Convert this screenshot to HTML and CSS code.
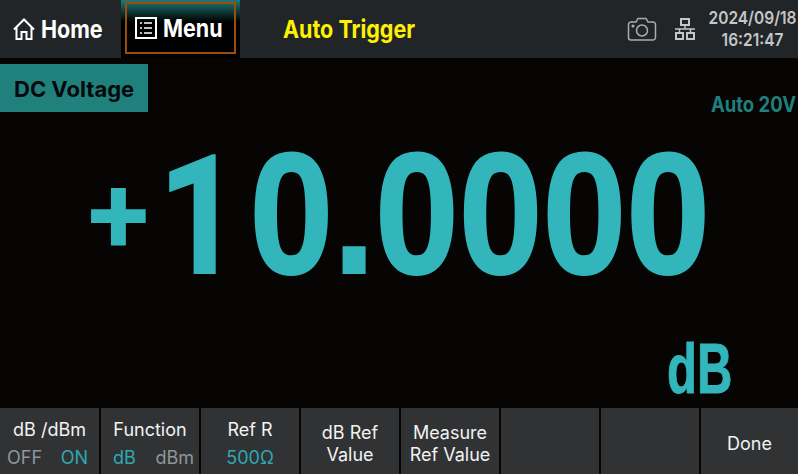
FILE: index.html
```html
<!DOCTYPE html>
<html lang="en">
<head>
  <meta charset="UTF-8" />
  <title>DC Voltage</title>
  <link rel="stylesheet" href="styles.css">
</head>
<body>
  <div class="screen">
    <header class="topbar">
      <div class="nav-home">
        <svg class="icon" width="22" height="22" viewBox="0 0 22 22" fill="none" stroke="#fff" stroke-width="2">
          <path d="M1 11.500 11 1.500l10 10M3.500 9.500V21h5v-7h5v7h5V9.500" />
        </svg>
        <span class="tall">Home</span>
      </div>
      <div class="nav-menu">
        <div class="nav-menu-box">
          <svg class="icon" width="22" height="22" viewBox="0 0 22 22" fill="none" stroke="#fff" stroke-width="2">
            <rect x="1" y="1" width="20" height="20" />
            <path d="M5 6h2M9 6h8M5 11h2M9 11h8M5 16h2M9 16h8" stroke-width="1.500" />
          </svg>
          <span class="tall">Menu</span>
        </div>
      </div>
      <div class="trigger"><span class="tall">Auto Trigger</span></div>
      <div class="status">
        <svg class="camera" width="30" height="26" viewBox="0 0 30 26" fill="none" stroke="#a9adaf" stroke-width="1.500">
          <path d="M4 6h5l2-3.500h8L21 6h5a2.500 2.500 0 0 1 2.500 2.500v13A2.500 2.500 0 0 1 26 24H4a2.500 2.500 0 0 1-2.500-2.500v-13A2.500 2.500 0 0 1 4 6Z" />
          <circle cx="15" cy="14.500" r="5.500" />
          <circle cx="6" cy="10" r="0.800" fill="#a9adaf" />
        </svg>
        <svg class="network" width="20" height="22" viewBox="0 0 20 22" fill="none" stroke="#c4c6c7" stroke-width="2">
          <rect x="6" y="1" width="8" height="6" />
          <rect x="1" y="15" width="7" height="6" />
          <rect x="12" y="15" width="7" height="6" />
          <path d="M10 7v4M0 11h20M4.500 11v4M15.500 11v4" stroke-width="1.500" />
        </svg>
        <div class="clock">
          <div class="tall">2024/09/18</div>
          <div class="tall">16:21:47</div>
        </div>
      </div>
    </header>

    <main class="display">
      <div class="display-head">
        <div class="mode">DC Voltage</div>
        <div class="range tall">Auto 20V</div>
      </div>
      <div class="reading">
        <span class="sign">+</span>
        <span class="digits"><span class="one">1</span>0.0000</span>
      </div>
      <div class="unit"><span>dB</span></div>
    </main>

    <footer class="softkeys">
      <div class="key">
        <div>dB /dBm</div>
        <div class="opts opts-onoff"><span class="off">OFF</span><span class="on">ON</span></div>
      </div>
      <div class="key">
        <div>Function</div>
        <div class="opts opts-func"><span class="on">dB</span><span class="off">dBm</span></div>
      </div>
      <div class="key">
        <div>Ref R</div>
        <div class="opts opts-single"><span class="on">500Ω</span></div>
      </div>
      <div class="key key-center"><div>dB Ref</div><div>Value</div></div>
      <div class="key key-center"><div>Measure</div><div>Ref Value</div></div>
      <div class="key"></div>
      <div class="key"></div>
      <div class="key key-center"><div>Done</div></div>
    </footer>
  </div>
</body>
</html>
```

FILE: styles.css
```css
* {
  box-sizing: border-box;
}

body {
  margin: 0;
  background: #070404;
  font-family: 'Inter', sans-serif;
}

.screen {
  width: 798px;
  height: 474px;
  display: flex;
  flex-direction: column;
  overflow: hidden;
}

/* the device font is drawn a bit taller than Inter */
.tall {
  display: inline-block;
  transform: scaleY(1.14);
}

.topbar {
  height: 58px;
  background: #212527;
  display: flex;
  color: #fff;
  font-size: 21.5px;
  font-weight: 700;
}

.icon {
  flex-shrink: 0;
}

.nav-home {
  width: 121px;
  padding-left: 13px;
  display: flex;
  align-items: center;
  gap: 6px;
}

.nav-menu {
  width: 119px;
  height: 58px;
  padding: 2px 4px 4px;
  background: linear-gradient(#1f7a76 0, #000 22px);
}

.nav-menu-box {
  height: 52px;
  border: 2px solid #9a4d0c;
  display: flex;
  align-items: center;
  gap: 6px;
  padding-left: 8px;
}

.trigger {
  margin-left: 43px;
  line-height: 58px;
  color: #fff200;
}

.status {
  margin-left: auto;
  display: flex;
  align-items: center;
}

.camera {
  margin-right: 18px;
}

.network {
  margin-right: 12px;
}

.clock {
  width: 91px;
  font-size: 15.5px;
  font-weight: 600;
  line-height: 22px;
  text-align: center;
  color: #c4c6c7;
}

.display {
  flex: 1;
  display: flex;
  flex-direction: column;
}

.display-head {
  display: flex;
  justify-content: space-between;
  padding-top: 6px;
}

.mode {
  width: 148px;
  height: 48px;
  padding-left: 14px;
  background: #20807c;
  color: #04090c;
  font-size: 22px;
  font-weight: 700;
  line-height: 50px;
}

.range {
  margin-top: 28px;
  height: 20px;
  line-height: 24px;
  padding-right: 2px;
  color: #20807c;
  font-size: 18.5px;
  font-weight: 700;
}

.reading {
  display: flex;
  align-items: baseline;
  height: 206px;
  padding-top: 6px;
  padding-left: 88px;
  color: #32b5bb;
  font-family: 'Liberation Sans', sans-serif;
  font-weight: 700;
  white-space: nowrap;
}

.sign {
  align-self: flex-start;
  width: 78px;
  padding-top: 41px;
  font-family: 'Roboto', sans-serif;
  font-size: 112px;
  line-height: 112px;
}

.digits {
  font-size: 173px;
  line-height: 190px;
  -webkit-text-stroke: 2px #32b5bb;
  transform: scaleX(0.87);
  transform-origin: left;
}

/* Liberation's 1 has a foot, the device's has none */
.one {
  display: inline-block;
  width: 96px;
  margin-left: -9px;
  margin-right: 9px;
  font-family: 'Roboto', sans-serif;
  font-size: 166px;
}

.unit {
  height: 80px;
  margin-top: 10px;
  padding-left: 667px;
  color: #32b5bb;
  font-family: 'Liberation Sans', sans-serif;
  font-size: 70px;
  font-weight: 700;
  line-height: 82px;
  -webkit-text-stroke: 1px #32b5bb;
}

.unit span {
  display: inline-block;
  transform: scaleX(0.7);
  transform-origin: left;
}

.softkeys {
  height: 66px;
  display: grid;
  grid-template-columns: 99px repeat(6, 98px) 97px;
  column-gap: 2px;
  color: #f2f2f2;
  font-size: 18px;
}

.key {
  background: #303234;
  padding-top: 11px;
  line-height: 22px;
  text-align: center;
}

.key-center {
  padding-top: 14px;
}

.key-center:last-child {
  padding-top: 25px;
}

.opts {
  display: flex;
  justify-content: space-between;
  margin-top: 6px;
}

.opts-onoff {
  padding: 0 11px 0 7px;
}

.opts-func {
  padding: 0 5px 0 12px;
}

.opts-single {
  justify-content: center;
}

.on {
  color: #2fa9b0;
}

.off {
  color: #8f979b;
}
```
